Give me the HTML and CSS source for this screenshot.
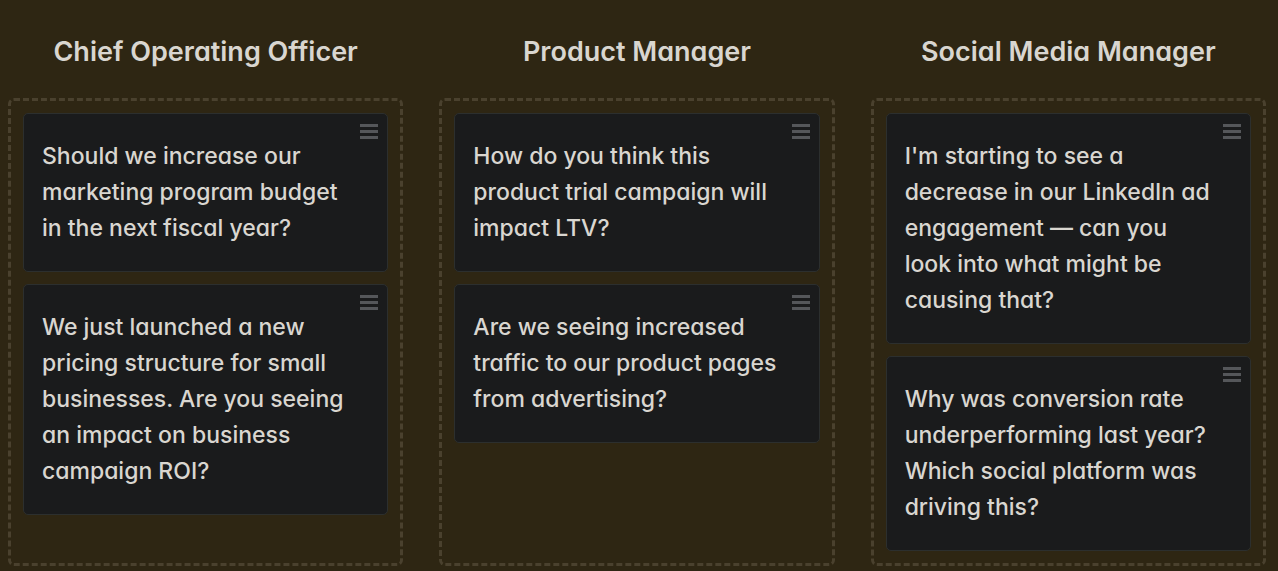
FILE: index.html
```html
<!DOCTYPE html>
<html lang="en">
<head>
<meta charset="utf-8">
<title>Question sorting</title>
<link rel="stylesheet" href="styles.css">
</head>
<body>
<main class="board">
  <section class="column">
    <h2 class="title">Chief Operating Officer</h2>
    <ul class="drop">
      <li class="card"><svg class="handle" viewBox="0 0 18 15" aria-hidden="true"><path d="M0 0h18v3H0zM0 6h18v3H0zM0 12h18v3H0z"/></svg>Should we increase our<br>marketing program budget<br>in the next fiscal year?</li>
      <li class="card"><svg class="handle" viewBox="0 0 18 15" aria-hidden="true"><path d="M0 0h18v3H0zM0 6h18v3H0zM0 12h18v3H0z"/></svg>We just launched a new<br>pricing structure for small<br>businesses. Are you seeing<br>an impact on business<br>campaign ROI?</li>
    </ul>
  </section>
  <section class="column">
    <h2 class="title">Product Manager</h2>
    <ul class="drop">
      <li class="card"><svg class="handle" viewBox="0 0 18 15" aria-hidden="true"><path d="M0 0h18v3H0zM0 6h18v3H0zM0 12h18v3H0z"/></svg>How do you think this<br>product trial campaign will<br>impact LTV?</li>
      <li class="card"><svg class="handle" viewBox="0 0 18 15" aria-hidden="true"><path d="M0 0h18v3H0zM0 6h18v3H0zM0 12h18v3H0z"/></svg>Are we seeing increased<br>traffic to our product pages<br>from advertising?</li>
    </ul>
  </section>
  <section class="column">
    <h2 class="title">Social Media Manager</h2>
    <ul class="drop">
      <li class="card"><svg class="handle" viewBox="0 0 18 15" aria-hidden="true"><path d="M0 0h18v3H0zM0 6h18v3H0zM0 12h18v3H0z"/></svg>I'm starting to see a<br>decrease in our LinkedIn ad<br>engagement — can you<br>look into what might be<br>causing that?</li>
      <li class="card"><svg class="handle" viewBox="0 0 18 15" aria-hidden="true"><path d="M0 0h18v3H0zM0 6h18v3H0zM0 12h18v3H0z"/></svg>Why was conversion rate<br>underperforming last year?<br>Which social platform was<br>driving this?</li>
    </ul>
  </section>
</main>
</body>
</html>
```

FILE: styles.css
```css
* { box-sizing: border-box; }

body {
  margin: 0;
  background: #2e2613;
  color: #d9d6d0;
  font-family: Inter, "Open Sans", sans-serif;
  /* single-storey "a" */
  font-feature-settings: "cv11";
}

.board {
  display: grid;
  grid-template-columns: repeat(3, 1fr);
  gap: 36px;
  padding: 32px 12px 5px 8px;
}

.column {
  display: flex;
  flex-direction: column;
}

.title {
  margin: 0 0 26px;
  font-size: 27px;
  line-height: 40px;
  font-weight: 600;
  text-align: center;
  white-space: nowrap;
}

.drop {
  flex: 1;
  display: flex;
  flex-direction: column;
  gap: 12px;
  margin: 0;
  padding: 12px;
  list-style: none;
  border: 3px dashed #4a412e;
  border-radius: 6px;
}

.card {
  position: relative;
  padding: 24px 18px 25px;
  border: 1px solid #2c2f2e;
  border-radius: 5px;
  background: #1a1b1c;
  font-size: 23px;
  line-height: 36px;
  font-weight: 500;
  white-space: nowrap;
}

.handle {
  position: absolute;
  top: 10px;
  right: 9px;
  width: 18px;
  height: 15px;
  fill: #55575a;
}
```
